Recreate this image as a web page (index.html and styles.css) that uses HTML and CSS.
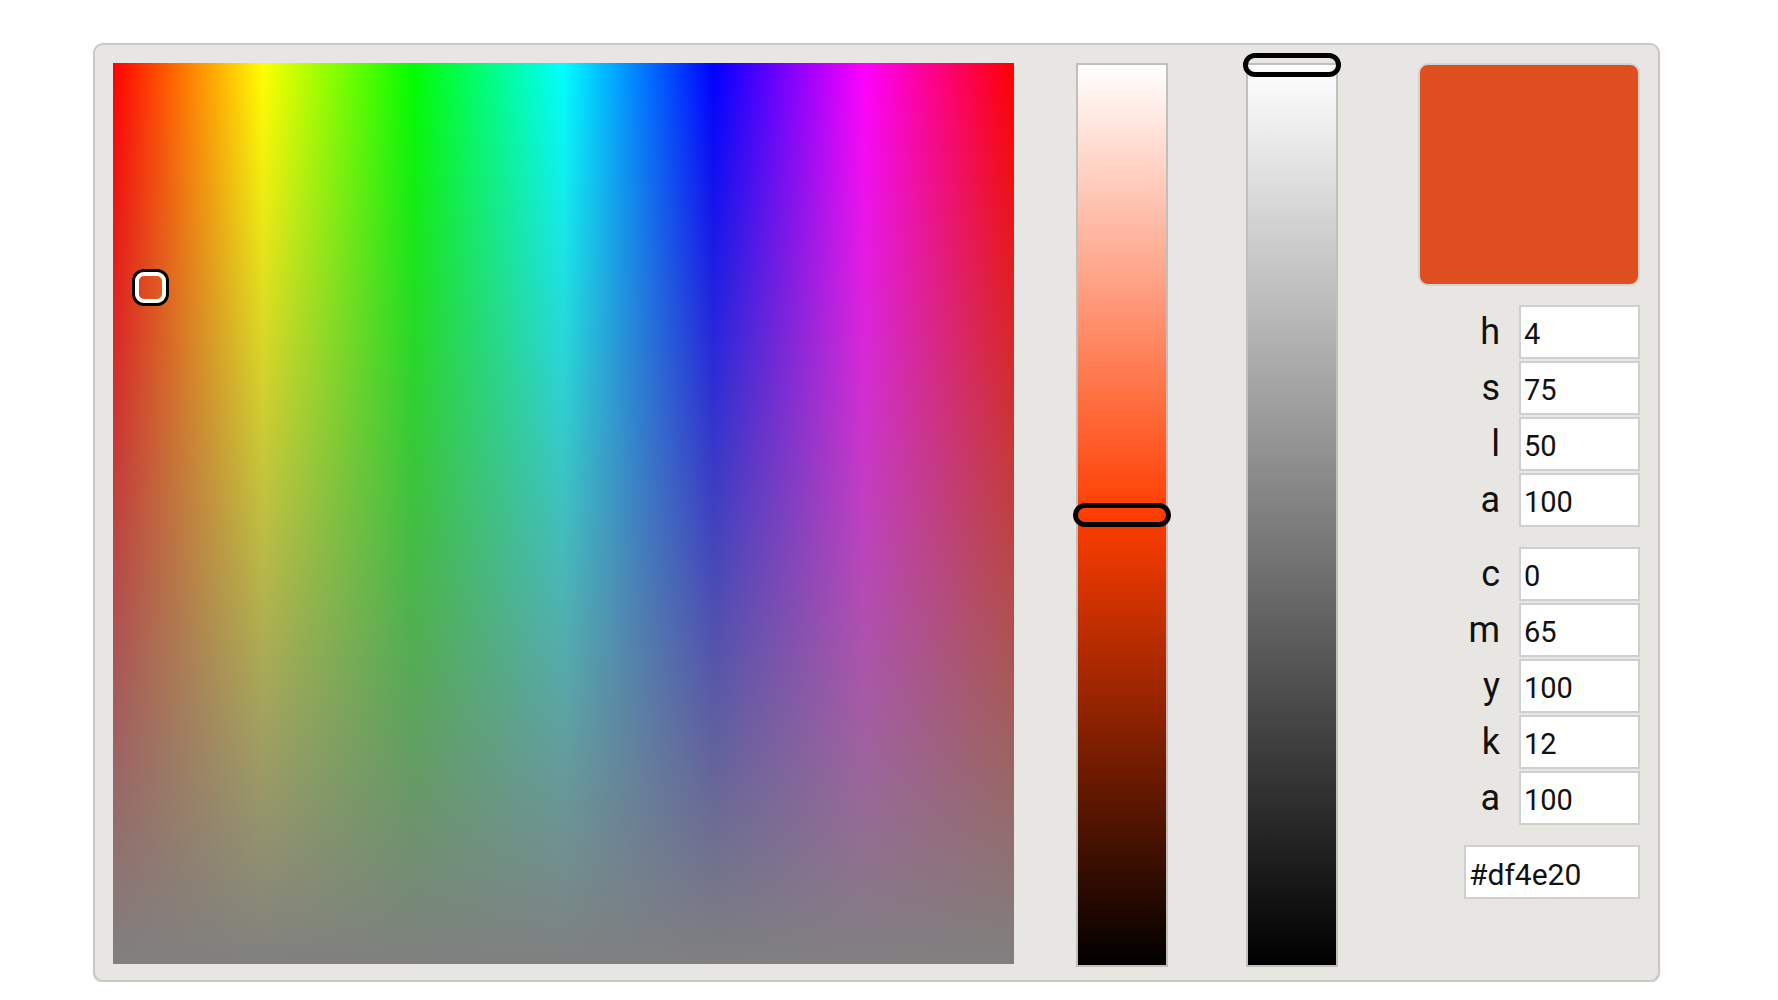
FILE: index.html
```html
<!DOCTYPE html>
<html>
<head>
<meta charset="utf-8">
<link rel="stylesheet" href="styles.css">
</head>
<body>
<div class="page">
  <div class="picker">
    <div class="field">
      <div class="field-overlay"></div>
      <div class="marker" style="left:37px;top:224px"></div>
    </div>
    <div class="slider slider-hue">
      <div class="thumb" style="top:450px"></div>
    </div>
    <div class="slider slider-gray">
      <div class="thumb" style="top:0px"></div>
    </div>
    <div class="side">
      <div class="swatch"></div>
      <div class="group">
        <div class="row"><span class="lbl">h</span><input class="inp" value="4"></div>
        <div class="row"><span class="lbl">s</span><input class="inp" value="75"></div>
        <div class="row"><span class="lbl">l</span><input class="inp" value="50"></div>
        <div class="row"><span class="lbl">a</span><input class="inp" value="100"></div>
      </div>
      <div class="group">
        <div class="row"><span class="lbl">c</span><input class="inp" value="0"></div>
        <div class="row"><span class="lbl">m</span><input class="inp" value="65"></div>
        <div class="row"><span class="lbl">y</span><input class="inp" value="100"></div>
        <div class="row"><span class="lbl">k</span><input class="inp" value="12"></div>
        <div class="row"><span class="lbl">a</span><input class="inp" value="100"></div>
      </div>
      <div class="group">
        <div class="row"><input class="inp hex" value="#df4e20"></div>
      </div>
    </div>
  </div>
</div>
</body>
</html>
```
FILE: styles.css
```css
html, body {
  margin: 0;
  padding: 0;
  background: #ffffff;
  font-family: Roboto, "Liberation Sans", sans-serif;
}
.page {
  padding: 43px 0 0 93px;
}
.picker {
  box-sizing: border-box;
  width: 1567px;
  height: 939px;
  background: #e8e6e2;
  border: 2px solid #c9c8c5;
  border-radius: 10px;
  box-shadow: 0 1px 1px rgba(0,0,0,0.18);
  padding: 18px 18px 0 18px;
  display: flex;
  align-items: flex-start;
}
.field {
  position: relative;
  width: 901px;
  height: 901px;
  flex: none;
  background: linear-gradient(to right, #ff0000 0%, #ffff00 16.67%, #00ff00 33.33%, #00ffff 50%, #0000ff 66.67%, #ff00ff 83.33%, #ff0000 100%);
}
.field-overlay {
  position: absolute;
  inset: 0;
  background: linear-gradient(to bottom, rgba(128,128,128,0) 0%, rgba(128,128,128,1) 100%);
}
.marker {
  position: absolute;
  box-sizing: border-box;
  width: 31px;
  height: 31px;
  margin: -15px 0 0 -15px;
  border: 4px solid #ffffff;
  border-radius: 9px;
  box-shadow: 0 0 0 3px #000000;
}
.slider {
  position: relative;
  box-sizing: border-box;
  width: 92px;
  height: 904px;
  flex: none;
  border: 2px solid #c0bfbc;
}
.slider-hue {
  margin-left: 62px;
  background: linear-gradient(to bottom, #ffffff 0%, #ff9e80 25%, #ff3d00 50%, #801f00 75%, #000000 100%);
}
.slider-gray {
  margin-left: 78px;
  background: linear-gradient(to bottom, #ffffff 0%, #000000 100%);
}
.thumb {
  position: absolute;
  box-sizing: border-box;
  left: -5px;
  width: 98px;
  height: 24px;
  margin-top: -12px;
  border: 5px solid #000000;
  border-radius: 12px;
}
.side {
  margin-left: 80px;
  width: 222px;
  flex: none;
  display: flex;
  flex-direction: column;
  gap: 20px;
}
.swatch {
  box-sizing: border-box;
  height: 223px;
  background: #df4e20;
  border: 2px solid #d6d3cf;
  border-radius: 10px;
  margin-bottom: -1px;
}
.group {
  display: flex;
  flex-direction: column;
  gap: 2px;
}
.row {
  display: flex;
  justify-content: flex-end;
  align-items: center;
  gap: 19px;
  height: 54px;
}
.lbl {
  font-size: 36px;
  color: #111111;
  line-height: 1;
}
.inp {
  box-sizing: border-box;
  width: 121px;
  height: 54px;
  margin: 0;
  border: 2px solid #cfcfcf;
  background: #ffffff;
  font-family: Roboto, "Liberation Sans", sans-serif;
  font-size: 29px;
  color: #111111;
  padding: 4px 0 0 3px;
  outline: none;
}
.inp.hex {
  width: 176px;
  font-size: 30px;
}
```
